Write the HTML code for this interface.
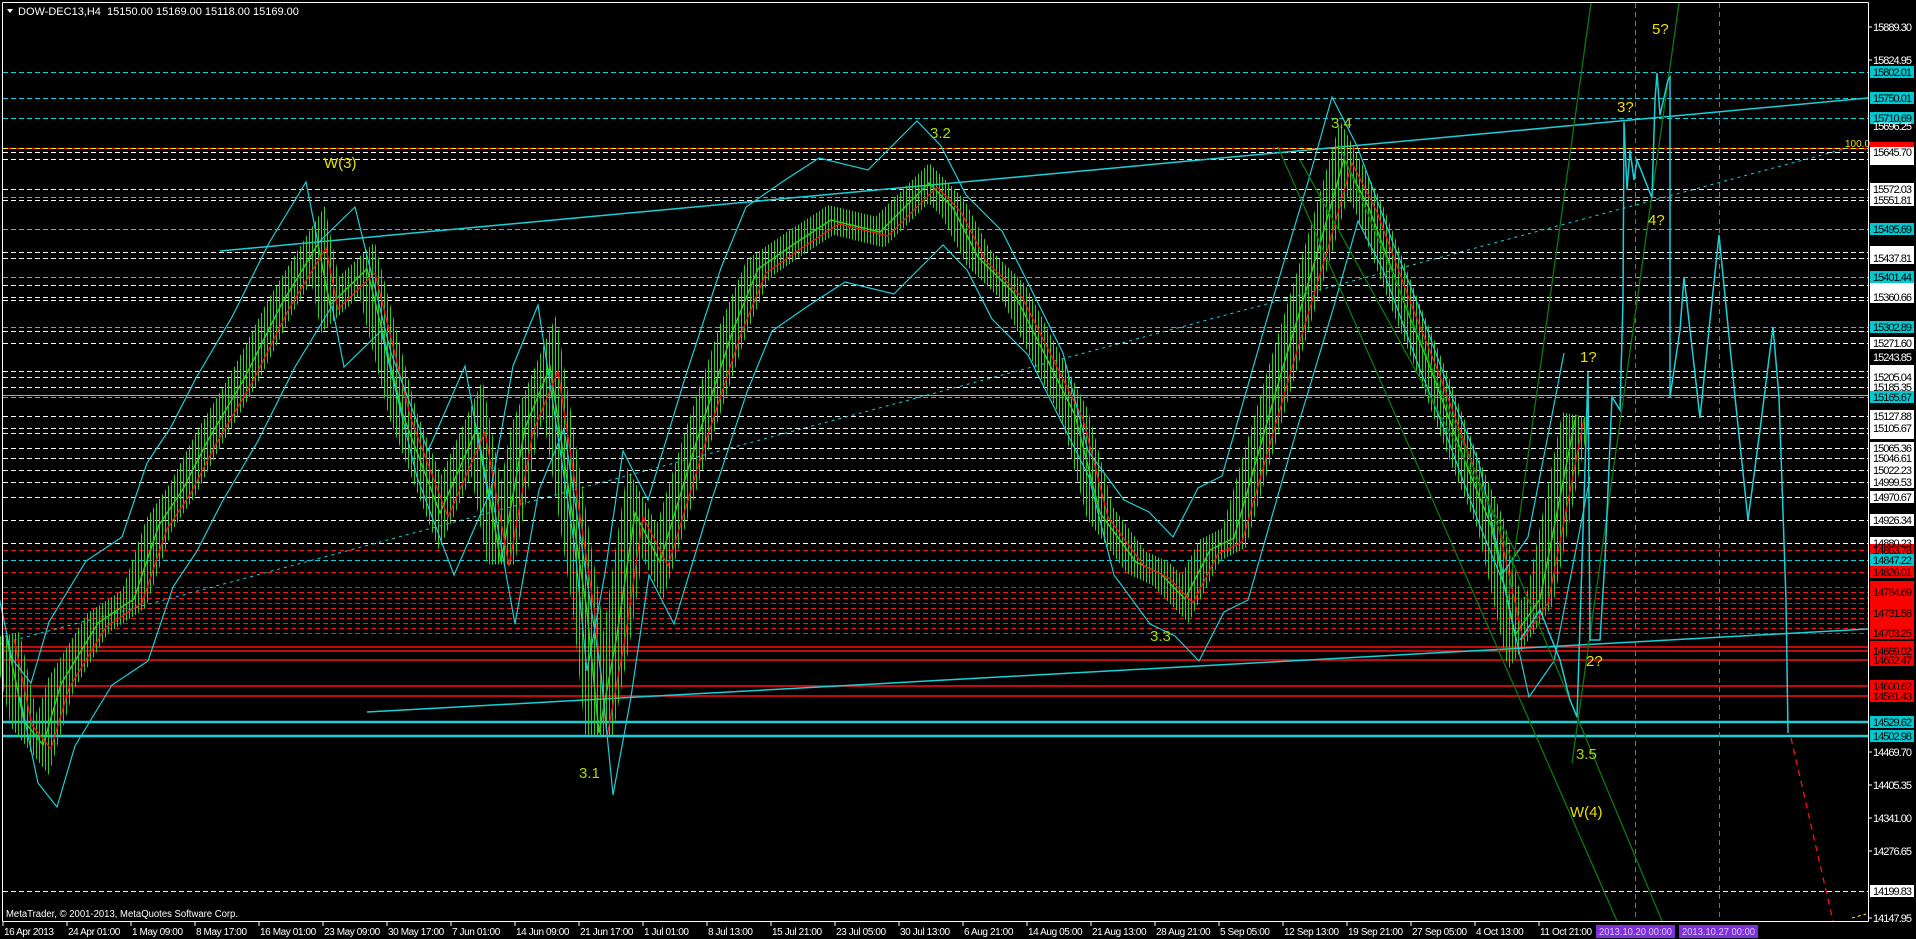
<!DOCTYPE html>
<html><head><meta charset="utf-8"><style>
html,body{margin:0;padding:0;background:#000;width:1916px;height:939px;overflow:hidden}
svg{display:block}
text{font-family:"Liberation Sans",sans-serif}
</style></head><body>
<svg width="1916" height="939" viewBox="0 0 1916 939" xmlns="http://www.w3.org/2000/svg">
<defs>
<pattern id="bars" patternUnits="userSpaceOnUse" width="3" height="12"><rect x="0" y="0" width="1" height="12" fill="#30d020"/></pattern>
<polyline id="px" fill="none" points="6,635 24,721 43,745 61,684 98,623 134,599 159,525 183,489 208,440 244,379 281,305 318,244 330,305 367,269 403,415 440,513 477,428 501,562 525,428 550,367 574,525 587,611 599,733 617,635 635,513 660,562 697,440 733,330 758,269 794,244 831,220 880,232 929,183 953,208 978,257 1014,293 1051,367 1075,415 1100,513 1136,562 1161,574 1185,599 1210,550 1234,538 1283,367 1320,244 1344,159 1369,208 1405,305 1430,367 1466,464 1491,525 1515,635 1540,599 1564,477 1576,415"/>
</defs>
<rect width="1916" height="939" fill="#000"/>

<g stroke-width="1" stroke-dasharray="5,3" fill="none">
<g stroke="#ffffff">
<line x1="3" x2="1868" y1="152.5" y2="152.5"/><line x1="3" x2="1868" y1="159.5" y2="159.5"/>
<line x1="3" x2="1868" y1="189.5" y2="189.5"/><line x1="3" x2="1868" y1="200.5" y2="200.5"/>
<line x1="3" x2="1868" y1="252.5" y2="252.5"/><line x1="3" x2="1868" y1="258.5" y2="258.5"/>
<line x1="3" x2="1868" y1="285.5" y2="285.5"/><line x1="3" x2="1868" y1="297.5" y2="297.5"/>
<line x1="3" x2="1868" y1="300.5" y2="300.5"/><line x1="3" x2="1868" y1="331.5" y2="331.5"/>
<line x1="3" x2="1868" y1="343.5" y2="343.5"/><line x1="3" x2="1868" y1="371.5" y2="371.5"/>
<line x1="3" x2="1868" y1="377.5" y2="377.5"/><line x1="3" x2="1868" y1="387.5" y2="387.5"/>
<line x1="3" x2="1868" y1="416.5" y2="416.5"/><line x1="3" x2="1868" y1="428.5" y2="428.5"/>
<line x1="3" x2="1868" y1="433.5" y2="433.5"/><line x1="3" x2="1868" y1="448.5" y2="448.5"/>
<line x1="3" x2="1868" y1="458.5" y2="458.5"/><line x1="3" x2="1868" y1="470.5" y2="470.5"/>
<line x1="3" x2="1868" y1="482.5" y2="482.5"/><line x1="3" x2="1868" y1="497.5" y2="497.5"/>
<line x1="3" x2="1868" y1="520.5" y2="520.5"/><line x1="3" x2="1868" y1="543.5" y2="543.5"/>
<line x1="3" x2="1868" y1="891.5" y2="891.5"/>
</g>
<g stroke="#00d8e0">
<line x1="3" x2="1868" y1="72.5" y2="72.5"/><line x1="3" x2="1868" y1="98.5" y2="98.5"/>
<line x1="3" x2="1868" y1="118.5" y2="118.5"/><line x1="3" x2="1868" y1="197.5" y2="197.5"/>
<line x1="3" x2="1868" y1="229.5" y2="229.5"/><line x1="3" x2="1868" y1="277.5" y2="277.5"/>
<line x1="3" x2="1868" y1="327.5" y2="327.5"/><line x1="3" x2="1868" y1="397.5" y2="397.5"/>
<line x1="3" x2="1868" y1="560.5" y2="560.5"/>
</g>
<g stroke="#ff1010">
<line x1="3" x2="1868" y1="550.5" y2="550.5"/><line x1="3" x2="1868" y1="572.5" y2="572.5"/>
<line x1="3" x2="1868" y1="587.5" y2="587.5"/><line x1="3" x2="1868" y1="592.5" y2="592.5"/>
<line x1="3" x2="1868" y1="598.5" y2="598.5"/><line x1="3" x2="1868" y1="603.5" y2="603.5"/>
<line x1="3" x2="1868" y1="608.5" y2="608.5"/><line x1="3" x2="1868" y1="613.5" y2="613.5"/>
<line x1="3" x2="1868" y1="618.5" y2="618.5"/><line x1="3" x2="1868" y1="623.5" y2="623.5"/>
<line x1="3" x2="1868" y1="628.5" y2="628.5"/><line x1="3" x2="1868" y1="633.5" y2="633.5"/>
</g>
<line x1="3" x2="1868" y1="148.5" y2="148.5" stroke="#ff1010" stroke-dasharray="none"/>
<line x1="3" x2="1868" y1="148.5" y2="148.5" stroke="#ffff00"/>
</g>
<line x1="3" x2="1868" y1="395.5" y2="395.5" stroke="#aaaaaa"/>
<g stroke="#ff1010" stroke-width="1.5">
<line x1="3" x2="1868" y1="647" y2="647"/><line x1="3" x2="1868" y1="651" y2="651"/>
<line x1="3" x2="1868" y1="660" y2="660"/><line x1="3" x2="1868" y1="686" y2="686"/>
<line x1="3" x2="1868" y1="696" y2="696"/>
</g>
<g stroke="#19d0d8" stroke-width="2.5">
<line x1="3" x2="1868" y1="722" y2="722"/><line x1="3" x2="1868" y1="736" y2="736"/>
</g>

<g stroke="#9a40ff" stroke-dasharray="5,4"><line x1="1635.5" x2="1635.5" y1="3" y2="921"/><line x1="1719.5" x2="1719.5" y1="3" y2="921"/></g>

<line x1="220" y1="251" x2="1868" y2="98" stroke="#19d0d8" stroke-width="1.5"/>
<line x1="367" y1="712" x2="1868" y2="629" stroke="#19d0d8" stroke-width="1.5"/>
<line x1="0" y1="644" x2="1848" y2="148" stroke="#19d0d8" stroke-dasharray="3,4"/>

<use href="#px" stroke="url(#bars)" stroke-width="28"/>
<use href="#px" stroke="#30d020" stroke-width="1.5"/>
<use href="#px" stroke="#ff1010" stroke-width="1.3" transform="translate(8,4)"/>
<use href="#px" stroke="#19d0d8" stroke-width="1.2" transform="translate(-12,-62)"/>
<use href="#px" stroke="#19d0d8" stroke-width="1.2" transform="translate(14,62)"/>

<g stroke="#0a7a0a" stroke-width="1.3" fill="none">
<line x1="1591" y1="3" x2="1508" y2="600"/>
<line x1="1679" y1="3" x2="1572" y2="763"/>
<line x1="1278" y1="147" x2="1617" y2="921"/>
<line x1="1340" y1="147" x2="1662" y2="921"/>
<line x1="1300" y1="160" x2="1520" y2="560"/>
</g>

<polyline fill="none" stroke="#19d0d8" stroke-width="1.5" points="1520,640 1540,610 1560,660 1570,700 1577,717 1584,500 1588,372 1590,640 1600,640 1605,560 1612,397 1620,410 1623,300 1624,122 1627,190 1630,150 1634,180 1637,160 1652,198 1655,100 1657,73 1660,115 1668,80 1670,77 1670,397 1680,330 1684,277 1700,418 1710,320 1719,235 1735,397 1748,520 1760,430 1773,327 1779,397 1786,600 1788,733"/>
<line x1="1791" y1="738" x2="1833" y2="921" stroke="#ff1010" stroke-width="1.3" stroke-dasharray="6,5"/>
<line x1="1852" y1="918" x2="1866" y2="914" stroke="#ffff00" stroke-dasharray="3,3"/>

<g font-size="15" fill="#e8e000">
<text x="324" y="168">W(3)</text>
<text x="1570" y="817">W(4)</text>
<text x="1580" y="362">1?</text>
<text x="1586" y="666">2?</text>
<text x="1617" y="112">3?</text>
<text x="1648" y="225">4?</text>
<text x="1652" y="34">5?</text>
</g>
<g font-size="15" fill="#a8d800">
<text x="930" y="138">3.2</text>
<text x="1331" y="128">3.4</text>
<text x="1150" y="641">3.3</text>
<text x="579" y="778">3.1</text>
<text x="1576" y="759">3.5</text>
</g>
<text x="1845" y="147" font-size="10" fill="#e8e000">100.0</text>

<g stroke="#ffffff" stroke-width="1" fill="none">
<line x1="2.5" y1="2.5" x2="1868.5" y2="2.5"/>
<line x1="2.5" y1="2.5" x2="2.5" y2="921.5"/>
<line x1="1868.5" y1="2.5" x2="1868.5" y2="921.5"/>
<line x1="2.5" y1="921.5" x2="1868.5" y2="921.5"/>
</g>

<polygon points="7,9 13,9 10,13" fill="#fff"/>
<text x="18" y="15" font-size="11" fill="#fff" xml:space="preserve">DOW-DEC13,H4  15150.00 15169.00 15118.00 15169.00</text>
<text x="6" y="917" font-size="10" fill="#fff" textLength="232" lengthAdjust="spacingAndGlyphs">MetaTrader, © 2001-2013, MetaQuotes Software Corp.</text>

<g font-size="11">
<g fill="#fff">
<rect x="1870" y="146" width="44" height="12"/><rect x="1870" y="153" width="44" height="12"/>
<rect x="1870" y="183" width="44" height="12"/><rect x="1870" y="194" width="44" height="12"/>
<rect x="1870" y="246" width="44" height="12"/><rect x="1870" y="252" width="44" height="12"/>
<rect x="1870" y="279" width="44" height="12"/><rect x="1870" y="291" width="44" height="12"/>
<rect x="1870" y="337" width="44" height="12"/><rect x="1870" y="365" width="44" height="12"/>
<rect x="1870" y="371" width="44" height="12"/><rect x="1870" y="381" width="44" height="12"/>
<rect x="1870" y="410" width="44" height="12"/><rect x="1870" y="422" width="44" height="12"/>
<rect x="1870" y="427" width="44" height="12"/><rect x="1870" y="442" width="44" height="12"/>
<rect x="1870" y="452" width="44" height="12"/><rect x="1870" y="464" width="44" height="12"/>
<rect x="1870" y="476" width="44" height="12"/><rect x="1870" y="491" width="44" height="12"/>
<rect x="1870" y="514" width="44" height="12"/><rect x="1870" y="537" width="44" height="12"/>
<rect x="1870" y="885" width="44" height="12"/>
</g>
<g fill="#00c8d0">
<rect x="1870" y="66" width="44" height="12"/><rect x="1870" y="92" width="44" height="12"/>
<rect x="1870" y="112" width="44" height="12"/><rect x="1870" y="223" width="44" height="12"/>
<rect x="1870" y="271" width="44" height="12"/><rect x="1870" y="321" width="44" height="12"/>
<rect x="1870" y="391" width="44" height="12"/><rect x="1870" y="554" width="44" height="12"/>
<rect x="1870" y="716" width="44" height="12"/><rect x="1870" y="730" width="44" height="12"/>
</g>
<g fill="#ff0000">
<rect x="1870" y="142" width="44" height="5"/>
<rect x="1870" y="544" width="44" height="10"/><rect x="1870" y="566" width="44" height="12"/>
<rect x="1870" y="581" width="44" height="58"/>
<rect x="1870" y="641" width="44" height="25"/>
<rect x="1870" y="680" width="44" height="22"/>
</g>
<g fill="#fff" lengthAdjust="spacingAndGlyphs">
<text x="1873" y="31" textLength="39">15889.30</text><text x="1873" y="64" textLength="39">15824.95</text>
<text x="1873" y="130" textLength="39">15696.25</text><text x="1873" y="361" textLength="39">15243.85</text>
<text x="1873" y="756" textLength="39">14469.70</text><text x="1873" y="789" textLength="39">14405.35</text>
<text x="1873" y="822" textLength="39">14341.00</text><text x="1873" y="855" textLength="39">14276.65</text>
<text x="1873" y="922" textLength="39">14147.95</text>
</g>
<g fill="#000">
<text x="1873" y="76" textLength="39">15802.01</text><text x="1873" y="102" textLength="39">15750.01</text>
<text x="1873" y="122" textLength="39">15710.69</text><text x="1873" y="156" textLength="39">15645.70</text>
<text x="1873" y="193" textLength="39">15572.03</text><text x="1873" y="204" textLength="39">15551.81</text>
<text x="1873" y="233" textLength="39">15495.69</text><text x="1873" y="262" textLength="39">15437.81</text>
<text x="1873" y="281" textLength="39">15401.44</text><text x="1873" y="301" textLength="39">15360.66</text>
<text x="1873" y="331" textLength="39">15302.89</text><text x="1873" y="347" textLength="39">15271.60</text>
<text x="1873" y="381" textLength="39">15205.04</text><text x="1873" y="391" textLength="39">15185.35</text>
<text x="1873" y="401" textLength="39">15165.67</text><text x="1873" y="420" textLength="39">15127.88</text>
<text x="1873" y="432" textLength="39">15105.67</text><text x="1873" y="452" textLength="39">15065.36</text>
<text x="1873" y="462" textLength="39">15046.61</text><text x="1873" y="474" textLength="39">15022.23</text>
<text x="1873" y="486" textLength="39">14999.53</text><text x="1873" y="501" textLength="39">14970.67</text>
<text x="1873" y="524" textLength="39">14926.34</text><text x="1873" y="547" textLength="39">14880.23</text>
<text x="1873" y="554" textLength="39">14863.78</text><text x="1873" y="564" textLength="39">14847.22</text>
<text x="1873" y="576" textLength="39">14826.01</text><text x="1873" y="596" textLength="39">14784.69</text>
<text x="1873" y="617" textLength="39">14731.58</text><text x="1873" y="637" textLength="39">14703.25</text>
<text x="1873" y="655" textLength="39">14669.02</text><text x="1873" y="664" textLength="39">14652.47</text>
<text x="1873" y="690" textLength="39">14600.62</text><text x="1873" y="700" textLength="39">14581.43</text>
<text x="1873" y="726" textLength="39">14529.62</text><text x="1873" y="740" textLength="39">14502.98</text>
<text x="1873" y="895" textLength="39">14199.83</text>
</g>
</g>
<g stroke="#fff"><line x1="1868" x2="1872" y1="27" y2="27"/><line x1="1868" x2="1872" y1="60" y2="60"/><line x1="1868" x2="1872" y1="752" y2="752"/><line x1="1868" x2="1872" y1="785" y2="785"/><line x1="1868" x2="1872" y1="818" y2="818"/><line x1="1868" x2="1872" y1="851" y2="851"/><line x1="1868" x2="1872" y1="918" y2="918"/></g>

<g font-size="10" fill="#fff" letter-spacing="-0.4">
<text x="4" y="935">16 Apr 2013</text><text x="68" y="935">24 Apr 01:00</text>
<text x="132" y="935">1 May 09:00</text><text x="196" y="935">8 May 17:00</text>
<text x="260" y="935">16 May 01:00</text><text x="324" y="935">23 May 09:00</text>
<text x="388" y="935">30 May 17:00</text><text x="452" y="935">7 Jun 01:00</text>
<text x="516" y="935">14 Jun 09:00</text><text x="580" y="935">21 Jun 17:00</text>
<text x="644" y="935">1 Jul 01:00</text><text x="708" y="935">8 Jul 13:00</text>
<text x="772" y="935">15 Jul 21:00</text><text x="836" y="935">23 Jul 05:00</text>
<text x="900" y="935">30 Jul 13:00</text><text x="964" y="935">6 Aug 21:00</text>
<text x="1028" y="935">14 Aug 05:00</text><text x="1092" y="935">21 Aug 13:00</text>
<text x="1156" y="935">28 Aug 21:00</text><text x="1220" y="935">5 Sep 05:00</text>
<text x="1284" y="935">12 Sep 13:00</text><text x="1348" y="935">19 Sep 21:00</text>
<text x="1412" y="935">27 Sep 05:00</text><text x="1476" y="935">4 Oct 13:00</text>
<text x="1540" y="935">11 Oct 21:00</text>
</g>
<g stroke="#fff">
<line x1="3" x2="3" y1="921" y2="926"/><line x1="67" x2="67" y1="921" y2="926"/><line x1="131" x2="131" y1="921" y2="926"/><line x1="195" x2="195" y1="921" y2="926"/><line x1="259" x2="259" y1="921" y2="926"/><line x1="323" x2="323" y1="921" y2="926"/><line x1="387" x2="387" y1="921" y2="926"/><line x1="451" x2="451" y1="921" y2="926"/><line x1="515" x2="515" y1="921" y2="926"/><line x1="579" x2="579" y1="921" y2="926"/><line x1="643" x2="643" y1="921" y2="926"/><line x1="707" x2="707" y1="921" y2="926"/><line x1="771" x2="771" y1="921" y2="926"/><line x1="835" x2="835" y1="921" y2="926"/><line x1="899" x2="899" y1="921" y2="926"/><line x1="963" x2="963" y1="921" y2="926"/><line x1="1027" x2="1027" y1="921" y2="926"/><line x1="1091" x2="1091" y1="921" y2="926"/><line x1="1155" x2="1155" y1="921" y2="926"/><line x1="1219" x2="1219" y1="921" y2="926"/><line x1="1283" x2="1283" y1="921" y2="926"/><line x1="1347" x2="1347" y1="921" y2="926"/><line x1="1411" x2="1411" y1="921" y2="926"/><line x1="1475" x2="1475" y1="921" y2="926"/><line x1="1539" x2="1539" y1="921" y2="926"/>
</g>
<rect x="1596" y="925" width="79" height="13" fill="#8030d8"/>
<rect x="1679" y="925" width="79" height="13" fill="#8030d8"/>
<g font-size="10" fill="#d8c8ff"><text x="1599" y="935" textLength="73" lengthAdjust="spacingAndGlyphs">2013.10.20 00:00</text><text x="1682" y="935" textLength="73" lengthAdjust="spacingAndGlyphs">2013.10.27 00:00</text></g>
</svg>
</body></html>
